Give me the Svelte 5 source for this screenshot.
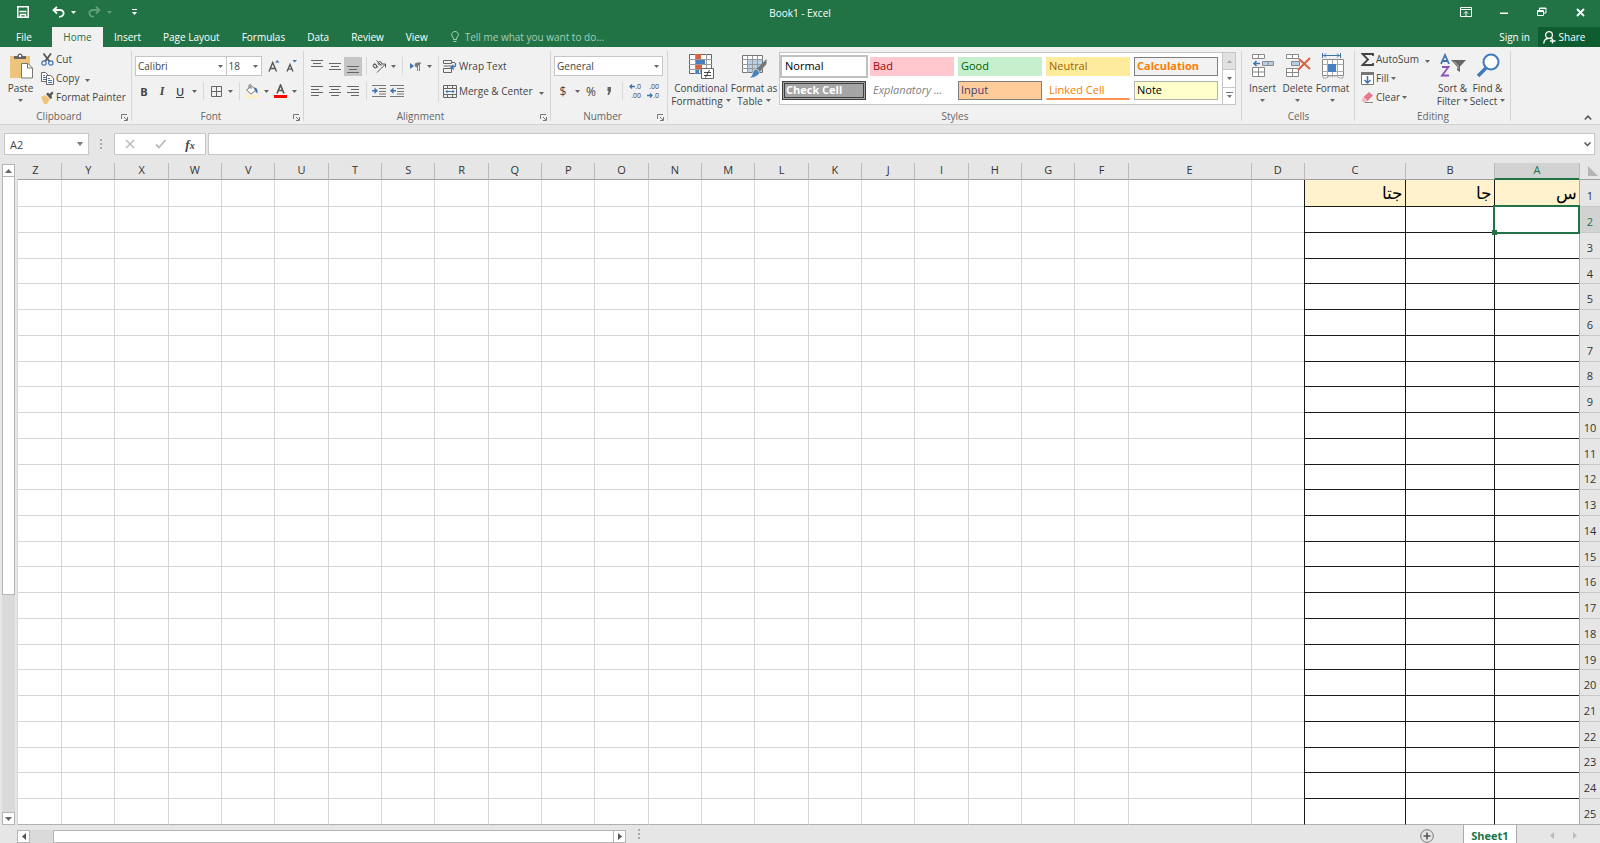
<script lang="ts">
    type CellStyle = { name: string, kind: string };

    const tabs = ['Insert', 'Page Layout', 'Formulas', 'Data', 'Review', 'View'];

    const cellStyles: CellStyle[] = [
        { name: 'Normal', kind: 'normal' },
        { name: 'Bad', kind: 'bad' },
        { name: 'Good', kind: 'good' },
        { name: 'Neutral', kind: 'neutral' },
        { name: 'Calculation', kind: 'calculation' },
        { name: 'Check Cell', kind: 'check' },
        { name: 'Explanatory ...', kind: 'explanatory' },
        { name: 'Input', kind: 'input' },
        { name: 'Linked Cell', kind: 'linked' },
        { name: 'Note', kind: 'note' }
    ];

    const columns = 'ABCDEFGHIJKLMNOPQRSTUVWXYZ'.split('');
    const rows = Array.from({ length: 25 }, (_, i) => i + 1);
    const values: Record<string, string> = { A1: 'س', B1: 'جا', C1: 'جتا' };

    let selected = $state('A2');
    let formula = $state('');

    // x start and width of every text line in the alignment icons
    const lineSets: Record<string, number[][]> = {
        top: [[0, 12], [2, 8], [0, 12]],
        middle: [[0, 12], [2, 8], [0, 12]],
        bottom: [[0, 12], [2, 8], [0, 12]],
        left: [[0, 12], [0, 8], [0, 12], [0, 8]],
        center: [[0, 12], [2, 8], [0, 12], [2, 8]],
        right: [[0, 12], [4, 8], [0, 12], [4, 8]]
    };
    const lineTops: Record<string, number> = { top: 0, middle: 3, bottom: 6, left: 1, center: 1, right: 1 };
</script>

{#snippet caret()}
    <svg class="caret" width="5" height="3" viewBox="0 0 5 3"><path d="M0 0h5L2.500 3z" fill="currentColor" /></svg>
{/snippet}

{#snippet drop(label: string)}
    <button class="drop" aria-label={label}>{@render caret()}</button>
{/snippet}

{#snippet lines(kind: string)}
    <button class="tool" class:on={kind === 'bottom'} aria-label="Align {kind}">
        <svg width="12" height="13" viewBox="0 0 12 13" fill="#666">
            {#each lineSets[kind] as [x, w], i}
                <rect {x} y={lineTops[kind] + i * 3} width={w} height="1" />
            {/each}
        </svg>
    </button>
{/snippet}

{#snippet launcher(label: string)}
    <button class="launcher" aria-label="{label} settings">
        <svg width="7" height="7" viewBox="0 0 7 7" fill="none" stroke="#777"><path d="M.5 5V.5H6M3 3l3 3M6.500 3v3.500H3" /></svg>
    </button>
{/snippet}

<div class="excel">
    <header>
        <div class="titlebar">
            <div class="quick">
                <button aria-label="Save">
                    <svg width="12" height="12" viewBox="0 0 12 12" fill="none" stroke="#fff" stroke-width="1.500"><path d="M.8.8h10.400v10.400H.8zM2.500 5.500h7M3.500 11V8.500h5V11" /></svg>
                </button>
                <button class="undo" aria-label="Undo">
                    <svg width="13" height="12" viewBox="0 0 13 12" fill="none" stroke="#fff" stroke-width="1.800"><path d="M5 .8L1.500 4 5 7.500M1.500 4H8c5 0 5 6.500-1 6.800" /></svg>
                </button>
                <button class="small" aria-label="Undo list">{@render caret()}</button>
                <button class="faded" aria-label="Redo">
                    <svg width="13" height="12" viewBox="0 0 13 12" fill="none" stroke="#fff" stroke-width="1.800"><path d="M8 .8L11.500 4 8 7.500M11.500 4H5c-5 0-5 6.500 1 6.800" /></svg>
                </button>
                <button class="small faded" aria-label="Redo list">{@render caret()}</button>
                <button class="customize" aria-label="Customize toolbar">
                    <svg width="5" height="6" viewBox="0 0 5 6" fill="#fff"><path d="M0 0h5v1H0zM0 3h5L2.500 6z" /></svg>
                </button>
            </div>
            <h1>Book1 - Excel</h1>
            <div class="window">
                <button aria-label="Ribbon display options">
                    <svg width="12" height="10" viewBox="0 0 12 10" fill="none" stroke="#fff"><path d="M.5.500h11v9H.5zM.5 2.500h11M6 9V4.500M4 6.500l2-2 2 2" /></svg>
                </button>
                <button aria-label="Minimize">
                    <svg width="8" height="10" viewBox="0 0 8 10" fill="#fff"><path d="M0 5.500h8v1.500H0z" /></svg>
                </button>
                <button aria-label="Restore">
                    <svg width="10" height="10" viewBox="0 0 10 10" fill="none" stroke="#fff"><path d="M.5 3.500h6v5h-6zM.5 4.500h6M2.500 3V1h6.500v5H7M2.500 1.500H9" /></svg>
                </button>
                <button aria-label="Close">
                    <svg width="9" height="9" viewBox="0 0 9 9" stroke="#fff" stroke-width="1.800"><path d="M1 1l7 7M8 1L1 8" /></svg>
                </button>
            </div>
        </div>
        <nav>
            <button class="file">File</button>
            <button class="active">Home</button>
            {#each tabs as tab}
                <button>{tab}</button>
            {/each}
            <label class="tell">
                <svg width="8" height="12" viewBox="0 0 8 12" fill="none" stroke="#a6cdb6"><path d="M2.500 8.500V7C-.5 4.500.5.500 4 .5s4.500 4 1.500 6.500v1.500zM2.500 10.500h3" /></svg>
                <input type="text" placeholder="Tell me what you want to do..." />
            </label>
            <button class="signin">Sign in</button>
            <button class="share">
                <svg width="13" height="13" viewBox="0 0 13 13" fill="none" stroke="#fff" stroke-width="1.300"><circle cx="6" cy="4" r="3.400" /><path d="M.7 12.500C1 9 3 7.500 5.500 7.500M7.500 7.300l1.500 1M9.500 7.500v5M7 10h5.500" /></svg>
                Share
            </button>
        </nav>
    </header>

    <div class="ribbon">
        <section class="group clipboard">
            <div class="body">
                <button class="big paste">
                    <svg width="24" height="26" viewBox="0 0 24 26"><path d="M1 3h20v22H1z" fill="#ecc47c" /><path d="M5 6V3h3.500a2.500 2.500 0 0 1 5 0H17v3z" fill="#666" /><path d="M10 2h2v2h-2z" fill="#fff" /><path d="M12.500 10.500H19l4.500 4.500v10h-11z" fill="#fff" stroke="#777" /><path d="M18.500 10.500V15H23" fill="none" stroke="#777" /></svg>
                    <span>Paste</span>
                    {@render caret()}
                </button>
                <div class="stack">
                    <button class="item">
                        <svg width="13" height="13" viewBox="0 0 13 13" fill="none"><path d="M2.500.5l6 8M10 .5l-6 8" stroke="#555" stroke-width="1.800" /><circle cx="3" cy="10" r="2.200" stroke="#3f74b1" stroke-width="1.200" /><circle cx="9.800" cy="10" r="2.200" stroke="#3f74b1" stroke-width="1.200" /></svg>
                        Cut
                    </button>
                    <button class="item">
                        <svg width="13" height="13" viewBox="0 0 13 13" fill="#fff" stroke="#666"><path d="M.5.500h4l2 2v7h-6z" /><path d="M2 3.500h2M2 5.500h3M2 7.500h3" stroke="#3f74b1" /><path d="M5.500 3.500h4l3 2.500v6.500h-7z" /><path d="M7 6.500h2M7 8.500h4M7 10.500h4" stroke="#3f74b1" /></svg>
                        Copy <span class="far">{@render caret()}</span>
                    </button>
                    <button class="item">
                        <svg width="13" height="13" viewBox="0 0 13 13"><path d="M0 6l4-2 5 4-3 5H3z" fill="#ecc47c" /><path d="M5 3l2-1.500L8.500 3 11 .5 12.500 2 10.500 4.500 11 7 9.500 8z" fill="#555" /></svg>
                        Format Painter
                    </button>
                </div>
            </div>
            <footer>Clipboard</footer>
            {@render launcher('Clipboard')}
        </section>

        <section class="group font">
            <div class="body lined">
                <div class="line">
                    <label class="pick family">
                        <select aria-label="Font"><option>Calibri</option></select>{@render caret()}
                    </label>
                    <label class="pick size">
                        <select aria-label="Font size"><option>18</option></select>{@render caret()}
                    </label>
                    <button class="tool grow" aria-label="Increase font size">
                        <svg width="12" height="14" viewBox="0 0 12 14"><path d="M1 12.500L4.700 3.500 8.500 12.500M2.500 9.500H7" fill="none" stroke="#555" stroke-width="1.400" /><path d="M7 3.500h4.500L9.200 1z" fill="#3f74b1" /></svg>
                    </button>
                    <button class="tool" aria-label="Decrease font size">
                        <svg width="12" height="14" viewBox="0 0 12 14"><path d="M1 12.500l3-7 3 7M2.200 10.200h3.600" fill="none" stroke="#555" stroke-width="1.300" /><path d="M6.500 1H11L8.700 3.500z" fill="#3f74b1" /></svg>
                    </button>
                </div>
                <div class="line">
                    <button class="tool bold">B</button>
                    <button class="tool italic">I</button>
                    <button class="tool under">U</button>
                    {@render drop('Underline')}
                    <i class="sep"></i>
                    <button class="tool" aria-label="Borders">
                        <svg width="11" height="11" viewBox="0 0 11 11" fill="none" stroke="#666"><path d="M.5.500h10v10H.5zM5.500.5v10M.5 5.500h10" /></svg>
                    </button>
                    {@render drop('Borders')}
                    <i class="sep"></i>
                    <button class="tool" aria-label="Fill color">
                        <svg width="14" height="14" viewBox="0 0 14 14"><path d="M0 11h14v3H0z" fill="#ffefc6" /><path d="M1.500 6l5-4 4.500 4-5 4z" fill="#fff" stroke="#777" /><path d="M4 4V1.500Q4 .5 5 .5t1 1V5" fill="none" stroke="#777" /><path d="M9 3.500q4-.5 3.500 6Q10 8 9 3.500" fill="#3f74b1" /></svg>
                    </button>
                    {@render drop('Fill color')}
                    <button class="tool" aria-label="Font color">
                        <svg width="13" height="14" viewBox="0 0 13 14"><path d="M3 9.500L6.500 1l3.500 8.500M4.500 6.500h4" fill="none" stroke="#555" stroke-width="1.600" /><path d="M0 11h13v3H0z" fill="#f00" /></svg>
                    </button>
                    {@render drop('Font color')}
                </div>
            </div>
            <footer>Font</footer>
            {@render launcher('Font')}
        </section>

        <section class="group alignment">
            <div class="body">
                <div class="lined">
                    <div class="line">
                        {@render lines('top')}
                        {@render lines('middle')}
                        {@render lines('bottom')}
                        <i class="sep"></i>
                        <button class="tool" aria-label="Orientation">
                            <svg width="14" height="13" viewBox="0 0 14 13" fill="none" stroke="#555"><path d="M5 12.500L13 4.500M10 4h3.500v3.500" /><ellipse cx="3" cy="6" rx="1.500" ry="2" transform="rotate(-45 3 6)" /><path d="M2.500 3.500l3.500 4M4.500.5l5 5" /><circle cx="7.800" cy="3.300" r="1.700" /></svg>
                        </button>
                        {@render drop('Orientation')}
                        <i class="sep"></i>
                        <button class="tool" aria-label="Text direction">
                            <svg width="11" height="9" viewBox="0 0 11 9"><path d="M0 1l4 3-4 3z" fill="#3f74b1" /><path d="M7 5a2 2 0 0 1 0-4h4M7.500 1v8M9.500 1v8" stroke="#777" fill="#777" stroke-width=".9" /></svg>
                        </button>
                        {@render drop('Text direction')}
                    </div>
                    <div class="line">
                        {@render lines('left')}
                        {@render lines('center')}
                        {@render lines('right')}
                        <i class="sep"></i>
                        <button class="tool" aria-label="Decrease indent">
                            <svg width="14" height="12" viewBox="0 0 14 12"><path d="M0 .5h14M7 3.500h7M7 6.500h7M7 9h7M0 11.500h14" stroke="#777" /><path d="M0 5h2.500V2.500L6 5.800 2.500 9V6.600H0z" fill="#3f74b1" /></svg>
                        </button>
                        <button class="tool" aria-label="Increase indent">
                            <svg width="14" height="12" viewBox="0 0 14 12"><path d="M0 .5h14M7 3.500h7M7 6.500h7M7 9h7M0 11.500h14" stroke="#777" /><path d="M6 5H3.500V2.500L0 5.800 3.500 9V6.600H6z" fill="#3f74b1" /></svg>
                        </button>
                    </div>
                </div>
                <i class="sep tall"></i>
                <div class="lined">
                    <button class="item line">
                        <svg width="14" height="13" viewBox="0 0 14 13" fill="none" stroke="#666"><path d="M.5.500h8v3h-8zM.5 8.500h8v4h-8zM.5 6h9M8 2.500h4" /><path d="M12.500 3v2.500q0 1.500-4 2M10.500 5L8 7.500l3 2" stroke="#3f74b1" stroke-width="1.300" /></svg>
                        Wrap Text
                    </button>
                    <button class="item line">
                        <svg width="14" height="13" viewBox="0 0 14 13" fill="none" stroke="#666"><path d="M.5.500h13v12H.5zM.5 3.500h13M.5 9.500h13M4.500.5v3M9.500.5v3M4.500 9.500v3M9.500 9.500v3" /><path d="M3 6.500h8M4.500 5L3 6.500 4.500 8M9.500 5L11 6.500 9.500 8" stroke="#3f74b1" /></svg>
                        Merge &amp; Center <span class="far">{@render caret()}</span>
                    </button>
                </div>
            </div>
            <footer>Alignment</footer>
            {@render launcher('Alignment')}
        </section>

        <section class="group number">
            <div class="body lined">
                <div class="line">
                    <label class="pick format">
                        <select aria-label="Number format"><option>General</option></select>{@render caret()}
                    </label>
                </div>
                <div class="line">
                    <button class="tool sign">$</button>
                    {@render drop('Accounting format')}
                    <button class="tool sign">%</button>
                    <button class="tool" aria-label="Comma style">
                        <svg width="5" height="8" viewBox="0 0 5 8" fill="#666"><path d="M.5 0H4v4L2 8H.5l1-4h-1z" /></svg>
                    </button>
                    <i class="sep"></i>
                    <button class="tool decimal" aria-label="Increase decimal">
                        <span><svg width="6" height="5" viewBox="0 0 6 5" fill="none" stroke="#3f74b1" stroke-width="1.300"><path d="M6 2.500H1M3 .5l-2 2 2 2" /></svg>.0</span>
                        <span>.00</span>
                    </button>
                    <button class="tool decimal" aria-label="Decrease decimal">
                        <span>.00</span>
                        <span><svg width="6" height="5" viewBox="0 0 6 5" fill="none" stroke="#3f74b1" stroke-width="1.300"><path d="M0 2.500h5M3 .5l2 2-2 2" /></svg>.0</span>
                    </button>
                </div>
            </div>
            <footer>Number</footer>
            {@render launcher('Number')}
        </section>

        <section class="group styles">
            <div class="body">
                <button class="big wide">
                    <svg width="26" height="26" viewBox="0 0 26 26"><path d="M1.500 1.500h22v19h-22z" fill="#fff" stroke="#666" /><path d="M1 6.500h23M1 11.500h23M1 16.500h23M7.500 1v20M12.500 1v20M18.500 1v20" stroke="#999" /><path d="M8 1h5v5H8zM8 12h6v4H8z" fill="#da6240" /><path d="M8 7h9v4H8zM8 17h3v4H8z" fill="#4a80bd" /><path d="M13.500 15.500h12v10h-12z" fill="#fff" stroke="#666" /><path d="M16 19.500h7M16 22.500h7M21.500 17l-4 7.500" stroke="#444" /></svg>
                    <span>Conditional</span>
                    <span>Formatting {@render caret()}</span>
                </button>
                <button class="big">
                    <svg width="26" height="26" viewBox="0 0 26 26"><path d="M1.500 2.500h20v17h-20z" fill="#fff" stroke="#777" /><path d="M7 7h14v12H7z" fill="#b8cfe8" /><path d="M1 6.500h21M1 11.500h21M1 15.500h21M6.500 3v17M11.500 3v17M16.500 3v17" stroke="#999" /><path d="M25.500 6v5l-7 8-3-3z" fill="#777" /><path d="M14.500 16q4 1 4 4.500-4 5-11 4.500 4-1.500 4-5 .5-3 3-4" fill="#4a80bd" stroke="#fff" stroke-width=".6" /></svg>
                    <span>Format as</span>
                    <span>Table {@render caret()}</span>
                </button>
                <div class="gallery">
                    <div class="cells">
                        {#each cellStyles as style}
                            <button class="swatch {style.kind}">{style.name}</button>
                        {/each}
                    </div>
                    <div class="scroller">
                        <button class="disabled" aria-label="Previous styles"><svg width="5" height="3" viewBox="0 0 5 3"><path d="M0 3h5L2.500 0z" fill="#aaa" /></svg></button>
                        <button aria-label="Next styles">{@render caret()}</button>
                        <button aria-label="More styles"><svg width="7" height="7" viewBox="0 0 7 7" fill="#777"><path d="M0 0h7v1H0zM1 3h5L3.500 6z" /></svg></button>
                    </div>
                </div>
            </div>
            <footer>Styles</footer>
        </section>

        <section class="group cellgroup">
            <div class="body">
                <button class="big">
                    <svg width="24" height="26" viewBox="0 0 24 26" fill="#fff" stroke="#888"><path d="M1.500 1.500h12v4h-12zM7.500 1.500v4M1.500 14.500h12v9h-12zM7.500 14.500v9M1.500 19h12" /><path d="M11.500 8.500h11v4h-11z" fill="#b8cfe8" /><path d="M17 8.500v4" /><path d="M9 10.500H3M5.500 8L3 10.500 5.500 13" fill="none" stroke="#3f74b1" stroke-width="1.500" /></svg>
                    <span>Insert</span>
                    {@render caret()}
                </button>
                <button class="big">
                    <svg width="26" height="26" viewBox="0 0 26 26" fill="#fff" stroke="#888"><path d="M1.500 1.500h12v4h-12zM7.500 1.500v4M1.500 15.500h12v8h-12zM7.500 15.500v8M1.500 19.500h12" /><path d="M6.500 8.500h8v4h-8z" fill="#b8cfe8" /><path d="M14 6l11 10M25 5L13 17" stroke="#da6240" stroke-width="2" /></svg>
                    <span>Delete</span>
                    {@render caret()}
                </button>
                <button class="big">
                    <svg width="24" height="26" viewBox="0 0 24 26" fill="#fff" stroke="#888"><path d="M1.500 6.500h21v16h-21z" /><path d="M1.500 11.500h21M1.500 18.500h21M6.500 6.500v18M16.500 6.500v18M11.500 6.500v18M2 22v3h4l2-2h8l2 2h4v-3" fill="none" stroke="#aaa" /><path d="M7 11h8v8H7z" fill="#4a80bd" stroke="none" /><path d="M1.500 0v5M19.500 0v5M2 2.500h17M5 .5l-2 2 2 2M16 .5l2 2-2 2" fill="none" stroke="#3f74b1" /></svg>
                    <span>Format</span>
                    {@render caret()}
                </button>
            </div>
            <footer>Cells</footer>
        </section>

        <section class="group editing">
            <div class="body">
                <div class="stack">
                    <button class="item">
                        <svg width="13" height="13" viewBox="0 0 13 13" fill="none" stroke="#444" stroke-width="1.800"><path d="M12 3V1H1.500L7 6.500 1.500 12H12V10" /></svg>
                        AutoSum <span class="far">{@render caret()}</span>
                    </button>
                    <button class="item">
                        <svg width="13" height="13" viewBox="0 0 13 13" fill="#fff" stroke="#777"><path d="M.5.500h12v12H.5z" /><path d="M0 0h13v3H0z" fill="#777" stroke="none" /><path d="M6.500 4v7M3.500 8l3 3 3-3" fill="none" stroke="#3f74b1" stroke-width="1.500" /></svg>
                        Fill {@render caret()}
                    </button>
                    <button class="item">
                        <svg width="13" height="13" viewBox="0 0 13 13"><path d="M2.500 6L8 1l4 3.500L6.500 10z" fill="#e8788c" /><path d="M2 6.500L6 10.200 4.500 11.500h-2L.500 9z" fill="#f3b6c0" /><path d="M4 11.500h8" stroke="#888" /></svg>
                        Clear {@render caret()}
                    </button>
                </div>
                <button class="big">
                    <svg width="26" height="26" viewBox="0 0 26 26" fill="none" stroke-width="1.800"><path d="M1 11l4-9 4 9M2.500 8h5" stroke="#3f74b1" /><path d="M2 14h6.500L2 22.500h7" stroke="#8c52b5" /><path d="M11 7h15l-6 6.500V19l-3-2v-3.500z" fill="#666" /><path d="M14 8.500l4 4v3.500" stroke="#bbb" stroke-width="1" /></svg>
                    <span>Sort &amp;</span>
                    <span>Filter {@render caret()}</span>
                </button>
                <button class="big">
                    <svg width="24" height="26" viewBox="0 0 24 26"><circle cx="15" cy="9" r="7.500" fill="#fff" stroke="#3f7abb" stroke-width="2" /><path d="M10 15l-8 8" stroke="#3f7abb" stroke-width="3.500" /></svg>
                    <span>Find &amp;</span>
                    <span>Select {@render caret()}</span>
                </button>
            </div>
            <footer>Editing</footer>
        </section>
        <button class="collapse" aria-label="Collapse ribbon">
            <svg width="8" height="5" viewBox="0 0 8 5" fill="none" stroke="#555" stroke-width="1.500"><path d="M.8 4.500L4 1.200l3.200 3.300" /></svg>
        </button>
    </div>

    <div class="formula">
        <label class="name">
            <input type="text" aria-label="Name box" bind:value={selected} />
            <svg width="6" height="4" viewBox="0 0 6 4" fill="#777"><path d="M0 0h6L3 4z" /></svg>
        </label>
        <svg class="grip" width="2" height="10" viewBox="0 0 2 10" fill="#aaa"><path d="M0 0h2v2H0zM0 4h2v2H0zM0 8h2v2H0z" /></svg>
        <div class="entry">
            <button aria-label="Cancel"><svg width="10" height="10" viewBox="0 0 10 10" stroke="#bbb" stroke-width="1.500"><path d="M1 1l8 8M9 1L1 9" /></svg></button>
            <button aria-label="Enter"><svg width="11" height="10" viewBox="0 0 11 10" fill="none" stroke="#bbb" stroke-width="1.800"><path d="M1 5.500l3 3L10.500 1" /></svg></button>
            <button class="fx">f<small>x</small></button>
        </div>
        <label class="text">
            <input type="text" aria-label="Formula bar" bind:value={formula} />
            <svg width="7" height="5" viewBox="0 0 7 5" fill="none" stroke="#555" stroke-width="1.500"><path d="M.5.500l3 3 3-3" /></svg>
        </label>
    </div>

    <main>
        <div class="vscroll">
            <button aria-label="Scroll up"><svg width="7" height="4" viewBox="0 0 7 4" fill="#666"><path d="M0 4h7L3.500 0z" /></svg></button>
            <div class="thumb"></div>
            <div class="track"></div>
            <button aria-label="Scroll down"><svg width="7" height="4" viewBox="0 0 7 4" fill="#666"><path d="M0 0h7L3.500 4z" /></svg></button>
        </div>
        <table dir="rtl">
            <colgroup>
                <col class="nums" />
                {#each columns as column}
                    <col class="col-{column}" />
                {/each}
            </colgroup>
            <thead>
                <tr>
                    <th class="corner"><svg width="10" height="10" viewBox="0 0 10 10"><path d="M0 0v10h10z" fill="#b5b5b5" /></svg></th>
                    {#each columns as column}
                        <th scope="col" class:current={selected.startsWith(column)}>{column}</th>
                    {/each}
                </tr>
            </thead>
            <tbody>
                {#each rows as row}
                    <tr>
                        <th scope="row" class:current={selected === selected[0] + row}>{row}</th>
                        {#each columns as column}
                            {@const id = column + row}
                            <td
                                class:boxed={column < 'D'}
                                class:heading={column < 'D' && row === 1}
                                class:selected={selected === id}
                                onclick={() => selected = id}
                            >{values[id] ?? ''}</td>
                        {/each}
                    </tr>
                {/each}
            </tbody>
        </table>
    </main>

    <div class="bottom">
        <div class="hscroll">
            <button aria-label="Scroll left"><svg width="4" height="7" viewBox="0 0 4 7" fill="#555"><path d="M4 0v7L0 3.500z" /></svg></button>
            <div class="thumb"></div>
            <button aria-label="Scroll right"><svg width="4" height="7" viewBox="0 0 4 7" fill="#555"><path d="M0 0v7l4-3.500z" /></svg></button>
        </div>
        <svg class="grip" width="2" height="10" viewBox="0 0 2 10" fill="#aaa"><path d="M0 0h2v2H0zM0 4h2v2H0zM0 8h2v2H0z" /></svg>
        <button class="add" aria-label="New sheet">
            <svg width="14" height="14" viewBox="0 0 14 14" fill="none" stroke="#777"><circle cx="7" cy="7" r="6.300" /><path d="M3.500 7h7M7 3.500v7" stroke="#555" stroke-width="1.600" /></svg>
        </button>
        <button class="sheet">Sheet1</button>
        <div class="pager">
            <button aria-label="Previous sheet"><svg width="4" height="7" viewBox="0 0 4 7" fill="#bbb"><path d="M4 0v7L0 3.500z" /></svg></button>
            <button aria-label="Next sheet"><svg width="4" height="7" viewBox="0 0 4 7" fill="#bbb"><path d="M0 0v7l4-3.500z" /></svg></button>
        </div>
    </div>
</div>

<style>

:global(body) {
    margin: 0;
}

.excel {
    display: flex;
    flex-direction: column;
    height: 100vh;
    overflow: hidden;
    background: #e6e6e6;
    color: #444;
    font-family: "Open Sans", "Noto Sans", sans-serif;
    font-size: 10px;
    line-height: 13px;
}

.excel * {
    box-sizing: border-box;
}

button, input, select {
    font: inherit;
    color: inherit;
    background: none;
    border: 0;
    border-radius: 0;
    padding: 0;
    margin: 0;
    outline: none;
}

button {
    display: flex;
    align-items: center;
    justify-content: center;
    white-space: nowrap;
    flex-shrink: 0;
}

svg {
    display: block;
    flex-shrink: 0;
}

.caret {
    display: inline-block;
    color: #666;
}

/* title bar and tabs */

header {
    background: #217346;
    color: #fff;
}

.titlebar {
    display: grid;
    grid-template-columns: 1fr auto 1fr;
    align-items: center;
    height: 27px;
}

h1 {
    margin: 0;
    font-size: 10px;
    font-weight: 400;
}

.quick {
    display: flex;
    align-items: center;
    height: 27px;
    padding: 0 0 3px 14px;
}

.quick button {
    width: 18px;
    height: 20px;
}

.quick .undo {
    margin-left: 17px;
}

.quick .small {
    width: 13px;
    margin-right: 5px;
}

.quick .customize {
    margin-left: 4px;
}

.quick .caret {
    color: #fff;
}

.faded {
    opacity: 0.3;
}

.window {
    display: flex;
    justify-content: flex-end;
    height: 27px;
    padding: 0 1px 3px 0;
}

.window button {
    width: 38px;
}

nav {
    display: flex;
    height: 20px;
}

nav button {
    padding: 0 11px;
}

nav .file {
    width: 52px;
    padding: 0 4px 0 0;
}

nav .active {
    width: 51px;
    padding: 0;
    background: #f1f1f1;
    color: #217346;
}

.tell {
    display: flex;
    align-items: center;
    flex: 1;
    gap: 6px;
    padding-left: 12px;
}

.tell input {
    width: 160px;
}

.tell input::placeholder {
    color: #a6cdb6;
    opacity: 1;
}

nav .signin {
    padding: 0 8px;
}

nav .share {
    width: 62px;
    gap: 3px;
    padding: 0 10px 0 0;
    background: #0e5c2f;
}

/* ribbon */

.ribbon {
    display: flex;
    flex-shrink: 0;
    height: 78px;
    background: #f1f1f1;
    border-bottom: 1px solid #d2d2d2;
}

.group {
    position: relative;
    display: flex;
    flex-direction: column;
    flex-shrink: 0;
}

.group::after {
    content: "";
    position: absolute;
    top: 4px;
    right: 0;
    bottom: 3px;
    border-right: 1px solid #d5d5d5;
}

.clipboard { width: 132px; }
.font { width: 172px; }
.alignment { width: 247px; }
.number { width: 117px; }
.styles { width: 574px; }
.cellgroup { width: 113px; }
.editing { width: 156px; }

.body {
    display: flex;
    flex: 1;
    padding: 3px 3px 0;
}

.lined {
    display: flex;
    flex-direction: column;
    gap: 5px;
    padding-top: 9px;
}

.alignment .body {
    padding: 0 4px;
}

.number .body {
    padding-left: 3px;
}

.line {
    display: flex;
    align-items: center;
    height: 20px;
}

footer {
    height: 15px;
    padding-right: 14px;
    line-height: 15px;
    text-align: center;
    color: #666;
}

.styles footer, .cellgroup footer, .editing footer {
    padding: 0;
}

.launcher {
    position: absolute;
    right: 4px;
    bottom: 3px;
}

.tool {
    width: 18px;
    height: 19px;
}

.tool.on {
    background: #c5c5c5;
}

.drop {
    width: 10px;
    height: 19px;
}

.sep {
    width: 1px;
    height: 18px;
    margin: 0 3px 0 4px;
    background: #d9d9d9;
}

.sep.tall {
    height: 46px;
    margin: 9px 4px 0;
}

.bold { font-weight: 700; font-size: 11px; }
.italic { font-style: italic; font-size: 12px; font-family: "Liberation Serif", serif; font-weight: 700; }
.under { text-decoration: underline; font-size: 11px; font-weight: 600; }
.sign { font-size: 12px; }
.grow { margin-left: 3px; }

.decimal {
    flex-direction: column;
    align-items: flex-end;
    padding-right: 3px;
    font-size: 7px;
    line-height: 9px;
}

.decimal span {
    display: flex;
    align-items: center;
}

.pick {
    position: relative;
    height: 20px;
    background: #fff;
    border: 1px solid #c6c6c6;
}

.pick select {
    width: 100%;
    height: 100%;
    padding-left: 2px;
    appearance: none;
}

.pick .caret {
    position: absolute;
    right: 3px;
    top: 8px;
    pointer-events: none;
}

.family { width: 93px; }
.size { width: 36px; border-left: 0; }
.format { width: 109px; }

.stack {
    display: flex;
    flex-direction: column;
    align-items: flex-start;
}

.item {
    gap: 2px;
    height: 19px;
    justify-content: flex-start;
}

.item.line {
    height: 20px;
}

.far {
    margin-left: 4px;
    line-height: 9px;
}

.big {
    flex-direction: column;
    justify-content: flex-start;
    width: 35px;
    padding-top: 3px;
}

.big svg:first-child {
    margin-bottom: 3px;
}

.big > .caret {
    margin-top: 4px;
}

.big span {
    display: flex;
    align-items: center;
    gap: 3px;
}

.clipboard .stack {
    padding-left: 3px;
}

.styles .big {
    width: 50px;
}

.styles .big.wide {
    width: 56px;
}

.styles .body {
    padding-left: 5px;
}

.editing .body {
    padding-left: 6px;
}

.editing .stack {
    width: 74px;
}

.gallery {
    display: flex;
    height: 53px;
    margin-top: 2px;
    background: #fff;
    border: 1px solid #c6c6c6;
}

.cells {
    display: grid;
    grid-template-columns: repeat(5, 84px);
    grid-auto-rows: 19px;
    gap: 5px 4px;
    padding: 4px 4px 4px 2px;
}

.swatch {
    justify-content: flex-start;
    padding: 0 0 1px 2px;
    font-size: 11px;
    line-height: 12px;
    border: 1px solid transparent;
}

.normal { color: #000; outline: 2px solid #c0c0c0; }
.bad { background: #ffc7ce; color: #9c0006; }
.good { background: #c6efce; color: #006100; }
.neutral { background: #ffeb9c; color: #9c6500; }
.calculation { background: #f2f2f2; color: #fa7d00; font-weight: 700; border-color: #7f7f7f; }
.check { background: #a5a5a5; color: #fff; font-weight: 700; border: 3px double #3f3f3f; padding-left: 1px; }
.explanatory { color: #7f7f7f; font-style: italic; }
.input { background: #ffcc99; color: #3f3f76; border-color: #7f7f7f; }
.linked { color: #fa7d00; border-bottom: 2px solid #ff8f4d; }
.note { background: #ffffcc; color: #000; border-color: #b2b2b2; }

.scroller {
    display: flex;
    flex-direction: column;
    width: 13px;
    border-left: 1px solid #c6c6c6;
}

.scroller button {
    flex: 1;
}

.scroller button + button {
    border-top: 1px solid #c6c6c6;
}

.scroller .disabled {
    background: #e1e1e1;
}

.collapse {
    align-self: flex-end;
    margin: 0 8px 4px auto;
}

/* formula bar */

.formula {
    display: flex;
    align-items: center;
    flex-shrink: 0;
    height: 38px;
    padding: 0 5px 0 4px;
}

.name, .entry, .text {
    display: flex;
    align-items: center;
    height: 22px;
    background: #fff;
    border: 1px solid #c6c6c6;
}

.name {
    width: 85px;
    padding: 0 5px;
}

.name input {
    flex: 1;
    min-width: 0;
    font-size: 11px;
}

.formula .grip {
    margin: 0 12px 0 11px;
}

.entry {
    width: 92px;
}

.entry button {
    flex: 1;
    height: 20px;
}

.fx {
    font-family: "Liberation Serif", serif;
    font-style: italic;
    font-weight: 700;
    font-size: 13px;
}

.fx small {
    font-size: 10px;
    padding-top: 3px;
}

.text {
    flex: 1;
    margin-left: 2px;
    padding: 0 3px;
}

.text input {
    flex: 1;
}

/* sheet */

main {
    display: flex;
    flex: 1;
    min-height: 0;
}

.vscroll {
    display: flex;
    flex-direction: column;
    flex-shrink: 0;
    width: 13px;
    margin: 1px 2px 0;
    background: #dadada;
}

.vscroll button, .hscroll button {
    width: 13px;
    height: 13px;
    background: #fff;
    border: 1px solid #b5b5b5;
}

.vscroll .thumb {
    flex: 418;
    background: #fff;
    border: 1px solid #b5b5b5;
    border-top: 0;
}

.vscroll .track {
    flex: 218;
}

table {
    flex: 1 1 0;
    width: 100%;
    height: 100%;
    table-layout: fixed;
    border-collapse: separate;
    border-spacing: 0;
}

.nums { width: 21px; }
.col-A { width: 85px; }
.col-B { width: 89px; }
.col-C { width: 101px; }
.col-E { width: 123px; }
.col-Z { width: 44px; }

th {
    padding: 0;
    font-size: 11px;
    font-weight: 400;
    color: #333;
    background: #e6e6e6;
}

thead th {
    height: 17px;
    padding-bottom: 2px;
    line-height: 14px;
    border-left: 1px solid #bbb;
    border-bottom: 1px solid #9f9f9f;
}

thead th.current {
    padding-bottom: 1px;
    color: #217346;
    background: #d2d2d2;
    border-bottom: 2px solid #217346;
}

thead th:last-child {
    padding-right: 8px;
    border-left-color: transparent;
}

.corner svg {
    margin: 1px 2px 0 0;
}

tbody th {
    padding-top: 4px;
    line-height: 13px;
    border-left: 1px solid #ababab;
    border-bottom: 1px solid #c8c8c8;
}

tbody th.current {
    color: #217346;
    background: #d2d2d2;
}

td {
    position: relative;
    padding: 0 2px;
    background: #fff;
    border-left: 1px solid #d6d6d6;
    border-bottom: 1px solid #d6d6d6;
    color: #000;
    font-size: 17px;
    line-height: 18px;
    cursor: cell;
}

td.boxed {
    border-color: #1a1a1a;
}

tbody tr:last-child > * {
    border-bottom-color: #b0b0b0;
}

td.heading {
    background: #fff2cc;
}

td.selected {
    z-index: 1;
}

td.selected::before {
    content: "";
    position: absolute;
    inset: -2px -1px -2px -2px;
    border: 2px solid #217346;
}

td.selected::after {
    content: "";
    position: absolute;
    left: -3px;
    bottom: -3px;
    width: 5px;
    height: 5px;
    background: #217346;
}

/* bottom bar */

.bottom {
    display: flex;
    align-items: center;
    flex-shrink: 0;
    height: 18px;
    padding-left: 17px;
}

.hscroll {
    display: flex;
    align-self: flex-end;
    width: 609px;
    background: #dadada;
}

.hscroll .thumb {
    flex: 1;
    margin-left: 23px;
    background: #fff;
    border: 1px solid #b5b5b5;
    border-right: 0;
}

.bottom .grip {
    margin-left: 12px;
}

.add {
    margin: 4px 29px 0 auto;
}

.sheet {
    width: 54px;
    height: 18px;
    padding-top: 3px;
    background: #fff;
    color: #217346;
    font-size: 11px;
    font-weight: 700;
    border: 1px solid #ababab;
    border-width: 0 1px;
}

.pager {
    display: flex;
    justify-content: center;
    width: 83px;
    padding: 3px 0 0 9px;
    gap: 19px;
}

</style>
